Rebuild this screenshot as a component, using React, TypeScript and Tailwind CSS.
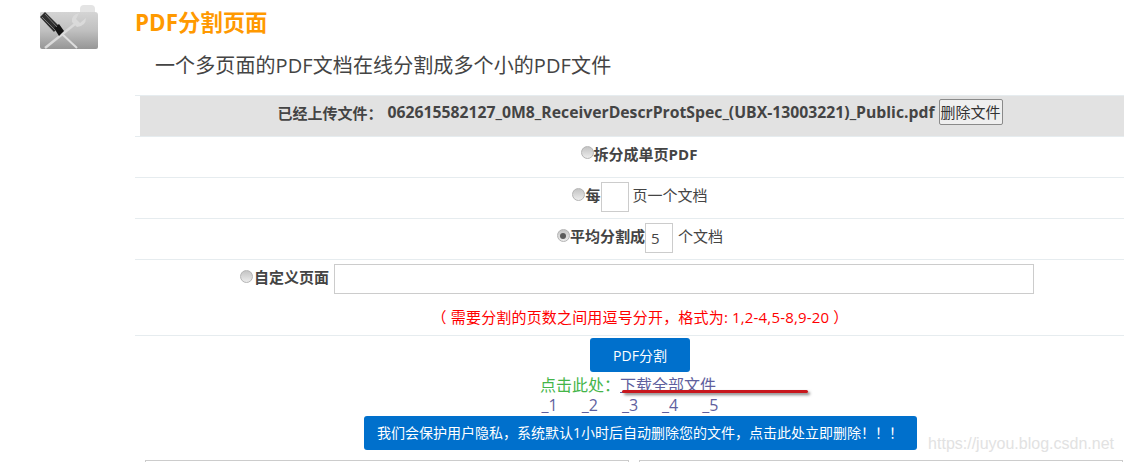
const font = "font-['Open_Sans','Noto_Sans_CJK_SC',sans-serif]"

function Radio({ checked }: { checked?: boolean }) {
  return (
    <span className="inline-flex w-[13px] h-[13px] rounded-full border border-[#b4b4b4] bg-gradient-to-b from-[#c4c4c4] to-[#ececec] items-center justify-center shrink-0 mb-[5px]">
      {checked && <span className="w-[6px] h-[6px] rounded-full bg-[#5a5a5a]" />}
    </span>
  )
}

function FolderIcon() {
  return (
    <svg width="60" height="52" viewBox="0 0 60 52">
      <defs>
        <linearGradient id="fold" x1="0" y1="0" x2="0" y2="1">
          <stop offset="0" stopColor="#d4d4d4" />
          <stop offset="0.5" stopColor="#c0c0c0" />
          <stop offset="1" stopColor="#969696" />
        </linearGradient>
      </defs>
      <path d="M41 9 Q41 5 45 5 L52 5 Q56 5 56 9 L56 13 L41 13 Z" fill="#e4e4e4" />
      <path d="M1 13 Q1 12 3 12 L56 12 Q59 12 59 15 L59 47 Q59 49 57 49 L3 49 Q1 49 1 47 Z" fill="url(#fold)" />
      <path d="M6 48 L36 24" stroke="#dadada" strokeWidth="2.5" />
      <path d="M22 33 L38 48" stroke="#dedede" strokeWidth="2" />
      <path d="M33 22 Q32 15 40 13 L37 19 L41 23 L47 18 Q47 26 38 27 Z" fill="#dadada" />
      <path d="M1 17 L6 12 L20 26 L15 32 Z" fill="#2e2e2e" />
      <path d="M15 28 L20 24 L25 31 L20 36 Z" fill="#141414" />
      <path d="M3 17 L16 30 M6 14 L18 27" stroke="#777777" strokeWidth="1" />
    </svg>
  )
}

export default function App() {
  return (
    <div className={`${font} relative w-[1124px] h-[462px] overflow-hidden bg-white flex text-[#444444]`}>
      <div className="w-[135px] shrink-0 pl-[39px]">
        <FolderIcon />
      </div>
      <div className="w-[1010px] shrink-0">
        <h1 className="text-[22.4px] leading-[24px] font-bold text-[#ff9900] mt-[11px]">PDF分割页面</h1>
        <p className="text-[20px] tracking-[0.1px] leading-[26px] mt-[18px] pl-[20px]">一个多页面的PDF文档在线分割成多个小的PDF文件</p>

        <div className="mt-[16px] border-t border-[#e6ecef]">
          <div className="mx-[5px] h-[40px] bg-[#e2e2e2] flex items-center justify-center font-bold pb-[8px]">
            <span className="text-[15px] mt-[2px]">已经上传文件：</span>
            <span className="text-[15.75px] ml-[5px] mt-[2px]">062615582127_0M8_ReceiverDescrProtSpec_(UBX-13003221)_Public.pdf</span>
            <button className="ml-[4px] w-[64px] h-[26px] border border-[#8a8a8a] rounded-[2px] bg-[#efefef] text-[15px] font-normal text-[#333333] leading-none">删除文件</button>
          </div>
          <div className="h-[41px] border-t border-[#e6ecef] flex items-center justify-center text-[15px] font-bold pb-[5px]">
            <Radio />
            <span className="mr-[2px]">拆分成单页PDF</span>
          </div>
          <div className="h-[41px] border-t border-[#e6ecef] flex items-center justify-center text-[15px] pb-[2px]">
            <Radio />
            <span className="font-bold mb-[3px]">每</span>
            <span className="w-[28px] h-[30px] border border-[#cccccc]" />
            <span className="ml-[4px] mb-[3px]">页一个文档</span>
          </div>
          <div className="h-[41px] border-t border-[#e6ecef] flex items-center justify-center text-[15px] pb-[2px]">
            <Radio checked />
            <span className="font-bold mb-[3px]">平均分割成</span>
            <span className="w-[28px] h-[30px] border border-[#cccccc] pl-[5px] leading-[28px] text-[15px]">5</span>
            <span className="ml-[5px] mb-[3px]">个文档</span>
          </div>
          <div className="h-[41px] border-t border-[#e6ecef] flex items-center pl-[105px] text-[15px] pb-[2px]">
            <Radio />
            <span className="font-bold mb-[3px] ml-px">自定义页面</span>
            <span className="ml-[5px] w-[700px] h-[30px] border border-[#cccccc]" />
          </div>
          <div className="h-[35px] flex items-center justify-center text-[15px] tracking-[0.17px] text-[#ff0000]">
            （ 需要分割的页数之间用逗号分开，格式为: 1,2-4,5-8,9-20 ）
          </div>
          <div className="border-t border-[#e6ecef] pt-[2px] flex flex-col items-center">
            <button className="w-[100px] h-[34px] rounded-[3px] bg-[#0070cc] text-white text-[14px]">PDF分割</button>
            <div className="h-[24px] leading-[24px] text-[16px] mt-px mr-[24px]">
              <span className="text-[#44b549]">点击此处：</span>
              <span className="text-[#5f5f9e] underline">下载全部文件</span>
            </div>
            <div className="flex gap-[24px] h-[16px] leading-[16px] text-[16px] text-[#5f5f9e] mr-[20px]">
              <span>_1</span>
              <span>_2</span>
              <span>_3</span>
              <span>_4</span>
              <span>_5</span>
            </div>
            <div className="mt-[3px] w-[553px] h-[34px] leading-[34px] text-center rounded-[3px] bg-[#0070cc] text-white text-[14px]">
              我们会保护用户隐私，系统默认1小时后自动删除您的文件，点击此处立即删除！！！
            </div>
          </div>
          <div className="mt-[10px] ml-[10px] flex gap-[10px]">
            <div className="w-[484px] h-[10px] border border-[#cccccc]" />
            <div className="w-[484px] h-[10px] border border-[#cccccc]" />
          </div>
        </div>
      </div>
      <div className="absolute left-[622px] top-[390px] w-[186px] h-[3px] rounded-full bg-[#c8171d] shadow-[2px_2px_3px_rgba(0,0,0,0.5)]" />
      <div className="absolute right-[10px] top-[432px] text-[16px] text-[#e2e2e2] font-['Liberation_Sans',sans-serif]">https://juyou.blog.csdn.net</div>
    </div>
  )
}
